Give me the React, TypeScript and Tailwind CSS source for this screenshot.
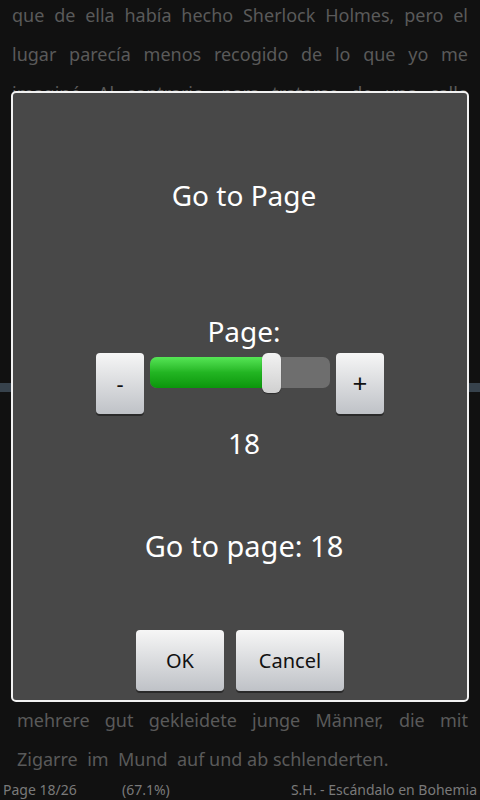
import React from 'react'

const topLines = [
  'que de ella había hecho Sherlock Holmes, pero el',
  'lugar parecía menos recogido de lo que yo me',
  'imaginé. Al contrario, para tratarse de una calle',
]

function GrayButton({ label, className }: { label: string; className: string }) {
  return (
    <button
      className={`flex items-center justify-center rounded-[4px] bg-gradient-to-b from-[#f6f6f6] to-[#bfc2c7] text-[#111] shadow-[0_2px_0_#2a2a2a] ${className}`}
    >
      {label}
    </button>
  )
}

export default function App() {
  return (
    <div
      className="relative flex h-[800px] w-[480px] flex-col overflow-hidden bg-[#111111]"
      style={{ fontFamily: '"Noto Sans", "Open Sans", sans-serif' }}
    >
      {/* reading page behind the dialog */}
      <div className="-mt-[4px] pl-[12px] pr-[12px] text-[18px] leading-[39px] text-[#5a5a5a]">
        {topLines.map((line) => (
          <div key={line} className="text-justify [text-align-last:justify] whitespace-nowrap">
            {line}
          </div>
        ))}
      </div>
      <div className="mt-[270px] h-[9px] bg-[#37424c]" />
      <div className="flex-1" />
      <div className="pl-[17px] pr-[12px] text-[18px] leading-[39px] text-[#5a5a5a]">
        <div className="text-justify [text-align-last:justify]">mehrere gut gekleidete junge Männer, die mit</div>
        <div className="whitespace-pre">Zigarre  im  Mund  auf und ab schlenderten.</div>
      </div>
      <div className="flex h-[21px] items-center px-[3px] text-[14px] text-[#7a7a7a]">
        <span className="w-[119px]">Page 18/26</span>
        <span>(67.1%)</span>
        <span className="ml-auto">S.H. - Escándalo en Bohemia</span>
      </div>

      {/* Go to Page dialog */}
      <div className="absolute left-[11px] top-[91px] flex h-[611px] w-[458px] flex-col items-center rounded-[5px] border-2 border-[#f2f2f2] bg-[#484848] text-white">
        <div className="ml-[8px] mt-[84px] text-[28px] leading-[36px]">Go to Page</div>
        <div className="ml-[8px] mt-[100px] text-[28px] leading-[36px]">Page:</div>
        <div className="mt-[4px] flex h-[61px] items-start gap-[6px]">
          <GrayButton label="-" className="h-[61px] w-[48px] text-[22px]" />
          <div className="relative mt-[4px] flex h-[31px] w-[180px] rounded-[7px] bg-[#6e6e6e]">
            <div className="h-full w-[122px] rounded-l-[7px] bg-gradient-to-b from-[#55e655] via-[#22b522] to-[#0a960a]" />
            <div className="absolute left-[112px] top-[-4px] h-[40px] w-[19px] rounded-[6px] bg-gradient-to-b from-[#f2f2f2] to-[#d0d0d0] shadow-[0_1px_1px_rgba(0,0,0,0.4)]" />
          </div>
          <GrayButton label="+" className="h-[61px] w-[48px] text-[26px]" />
        </div>
        <div className="ml-[8px] mt-[11px] text-[28px] leading-[36px]">18</div>
        <div className="ml-[8px] mt-[67px] text-[29px] leading-[36px]">Go to page: 18</div>
        <div className="mt-[66px] flex gap-[12px]">
          <GrayButton label="OK" className="h-[61px] w-[88px] text-[20px]" />
          <GrayButton label="Cancel" className="h-[61px] w-[108px] text-[20px]" />
        </div>
      </div>
    </div>
  )
}
